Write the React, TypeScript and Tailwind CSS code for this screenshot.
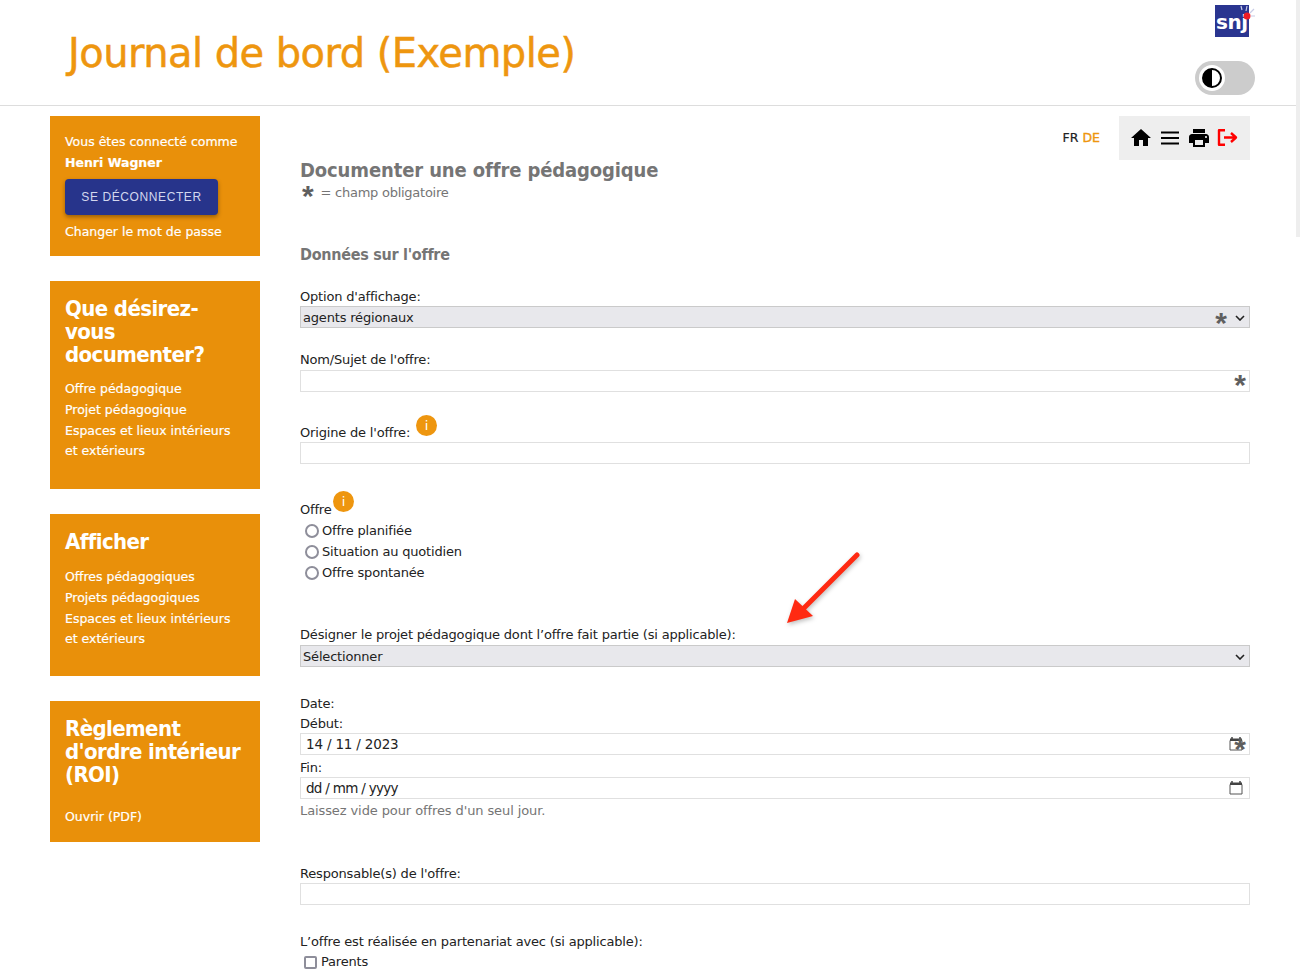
import { MdHome, MdPrint } from 'react-icons/md';

const Star = ({ className }: { className: string }) => (
  <span className={`absolute font-bold text-[#5f5f5f] text-[30px] leading-none tracking-normal font-['Liberation_Sans',sans-serif] ${className}`}>*</span>
);

const Chevron = () => (
  <svg className="absolute right-[4px] top-[8px]" width="10" height="6" viewBox="0 0 10 6" fill="none" stroke="#222" strokeWidth="1.6">
    <path d="M1 1l4 4 4-4" />
  </svg>
);

const CalendarIcon = () => (
  <svg className="absolute right-[6px] top-[3px]" width="14" height="14" viewBox="0 0 14 14" fill="none">
    <path d="M1 3.5h12v9.5H1z" stroke="#555" strokeWidth="1" />
    <path d="M1 1.5h12v2.500H1z" fill="#444" />
    <path d="M3 0v2M11 0v2" stroke="#444" strokeWidth="1.500" />
  </svg>
);

const Info = ({ className }: { className: string }) => (
  <span className={`inline-flex w-[21px] h-[21px] rounded-full bg-[#ee960f] text-white text-[13px] leading-none items-center justify-center ${className}`}>i</span>
);

const Radio = ({ label }: { label: string }) => (
  <div className="flex items-center h-[21px] pl-[5px]">
    <span className="w-[14px] h-[14px] rounded-full border-2 border-[#8e8e9a] bg-white mr-[3px]" />
    <span>{label}</span>
  </div>
);

const Field = ({ className = '', children }: { className?: string; children?: React.ReactNode }) => (
  <div className={`relative h-[22px] border border-[#e0e0e0] bg-white pl-[5px] text-[13.500px] leading-[20px] ${className}`}>{children}</div>
);

const Select = ({ children, star }: { children: React.ReactNode; star?: boolean }) => (
  <div className="relative h-[22px] border border-[#cacaca] bg-[#e8e8ec] pl-[2px] leading-[21px]">
    {children}
    {star && <Star className="right-[22px] top-[1px]" />}
    <Chevron />
  </div>
);

const SideCard = ({ className, title, links, gap }: { className: string; title: React.ReactNode; links: string[]; gap: string }) => (
  <div className={`bg-[#e9900a] px-[15px] text-white ${className}`}>
    <h2 className="text-[22px] leading-[23px] font-bold tracking-[-0.6px] font-['DejaVu_Sans_Condensed','DejaVu_Sans',sans-serif]">{title}</h2>
    <div className={`${gap} leading-[20.800px] text-[12.500px] [-webkit-text-stroke:0.2px_white]`}>
      {links.map((l) => (
        <div key={l}>{l}</div>
      ))}
    </div>
  </div>
);

export default function App() {
  return (
    <div className="relative h-[975px] w-[1300px] overflow-hidden bg-white text-[13px] text-[#222] font-['DejaVu_Sans',sans-serif]">
      {/* Header */}
      <header className="relative h-[106px] border-b border-[#dddddd]">
        <h1 className="absolute left-[68px] top-[27px] text-[40px] leading-[52px] tracking-[-0.55px] text-[#ee960f] [-webkit-text-stroke:0.5px_#ee960f]">Journal de bord (Exemple)</h1>
        <div className="absolute left-[1215px] top-[5px] w-[34px] h-[32px] bg-[#2a3590]" />
        <span className="absolute left-[1216px] top-[10px] text-[20px] leading-[24px] font-bold text-white tracking-[-0.5px]">snj</span>
        <svg className="absolute left-[1236px] top-[5px]" width="20" height="20" viewBox="0 0 20 20">
          <circle cx="11" cy="11" r="3.500" fill="#ee1c25" />
          <path d="M6 5L5 1M10 6l1-5M14 8l4-4M15 11h4" stroke="#c8cce6" strokeWidth="1.200" />
        </svg>
        <div className="absolute left-[1195px] top-[61px] w-[60px] h-[34px] rounded-full bg-[#cccccc]">
          <div className="absolute left-[4px] top-[4px] w-[26px] h-[26px] rounded-full bg-white flex items-center justify-center">
            <svg width="20" height="20" viewBox="0 0 20 20">
              <circle cx="10" cy="10" r="9" fill="none" stroke="#000" strokeWidth="2" />
              <path d="M10 1a9 9 0 0 0 0 18z" fill="#000" />
            </svg>
          </div>
        </div>
      </header>

      <div className="flex pl-[50px] pr-[50px]">
        {/* Sidebar */}
        <aside className="w-[210px] shrink-0 pt-[10px] flex flex-col gap-[25px]">
          <div className="h-[140px] bg-[#e9900a] px-[15px] pt-[15px] text-white text-[12.500px] leading-[21px] [-webkit-text-stroke:0.2px_white]">
            <div>Vous êtes connecté comme</div>
            <div className="font-bold">Henri Wagner</div>
            <button className="mt-[6px] h-[36px] w-[153px] rounded-[4px] bg-[#27348b] text-[12px] tracking-[0.6px] text-[#d3d7ee] font-['Liberation_Sans',sans-serif] [-webkit-text-stroke:0] shadow-[0_2px_4px_rgba(0,0,0,0.35)]">SE DÉCONNECTER</button>
            <div className="mt-[6px]">Changer le mot de passe</div>
          </div>
          <SideCard
            className="h-[208px] pt-[16px]"
            gap="mt-[13px]"
            title={<>Que désirez-<br />vous<br />documenter?</>}
            links={['Offre pédagogique', 'Projet pédagogique', 'Espaces et lieux intérieurs', 'et extérieurs']}
          />
          <SideCard
            className="h-[162px] pt-[16px]"
            gap="mt-[14px]"
            title="Afficher"
            links={['Offres pédagogiques', 'Projets pédagogiques', 'Espaces et lieux intérieurs', 'et extérieurs']}
          />
          <SideCard
            className="h-[141px] pt-[16px]"
            gap="mt-[21px]"
            title={<>Règlement<br />d'ordre intérieur<br />(ROI)</>}
            links={['Ouvrir (PDF)']}
          />
        </aside>

        {/* Main */}
        <main className="relative ml-[40px] flex-1 pt-[10px] tracking-[-0.18px]">
          <div className="flex justify-end items-center h-[44px]">
            <span className="mr-[19px] text-[12.500px] tracking-normal [-webkit-text-stroke:0.2px]">FR <span className="text-[#ee960f] [-webkit-text-stroke:0.4px_#ee960f]">DE</span></span>
            <div className="w-[131px] h-[44px] bg-[#eeeeee] flex items-center pl-[10px] gap-[2px]">
              <MdHome className="w-[24px] h-[24px] text-black" />
              <svg width="24" height="24" viewBox="0 0 24 24" className="ml-[3px]">
                <path d="M3 6.500h18M3 12h18M3 17.500h18" stroke="#000" strokeWidth="2" />
              </svg>
              <MdPrint className="w-[24px] h-[24px] text-black ml-[3px]" />
              <svg width="22" height="20" viewBox="0 0 22 20" fill="none" stroke="#f00" strokeWidth="2.400" className="ml-[4px]">
                <path d="M8 2.200H2v14.600h6M7 9.500h12M14 5l5 4.500-5 4.500" strokeLinejoin="round" />
              </svg>
            </div>
          </div>

          <h2 className="mt-[-1px] text-[20px] leading-[22px] font-bold text-[#757575] tracking-[-0.12px] font-['DejaVu_Sans_Condensed','DejaVu_Sans',sans-serif]">Documenter une offre pédagogique</h2>
          <div className="relative h-[23px] pl-[20.500px] leading-[24px] text-[#757575] tracking-[-0.25px]">
            <Star className="left-[2px] top-[0px]" />= champ obligatoire
          </div>

          <h3 className="mt-[40px] text-[16px] leading-[22px] font-bold text-[#757575] tracking-[-0.28px] font-['DejaVu_Sans_Condensed','DejaVu_Sans',sans-serif]">Données sur l'offre</h3>

          <div className="mt-[21px] h-[19px] leading-[20px]">Option d'affichage:</div>
          <Select star>agents régionaux</Select>

          <div className="mt-[22px] leading-[20px]">Nom/Sujet de l'offre:</div>
          <Field><Star className="right-[3px] top-[-1px]" /></Field>

          <div className="relative mt-[31px] h-[19px] leading-[20px]">Origine de l'offre:<Info className="absolute left-[116px] top-[-8px]" /></div>
          <Field />

          <div className="relative mt-[36px] h-[20px] leading-[20px]">Offre<Info className="absolute left-[33px] top-[-9px]" /></div>
          <div>
            <Radio label="Offre planifiée" />
            <Radio label="Situation au quotidien" />
            <Radio label="Offre spontanée" />
          </div>

          <div className="mt-[42px] leading-[20px]">Désigner le projet pédagogique dont l’offre fait partie (si applicable):</div>
          <Select>Sélectionner</Select>

          <div className="mt-[27px] leading-[20px]">Date:</div>
          <div className="h-[19px] leading-[20px]">Début:</div>
          <Field>14 / 11 / 2023<CalendarIcon /><Star className="right-[3px] top-[0px]" /></Field>
          <div className="mt-[2px] h-[20px] leading-[21px]">Fin:</div>
          <Field className="tracking-[-0.7px]">dd / mm / yyyy<CalendarIcon /></Field>
          <div className="mt-[1px] leading-[21px] text-[#757575] tracking-[-0.1px]">Laissez vide pour offres d'un seul jour.</div>

          <div className="mt-[43px] h-[19px] leading-[20px]">Responsable(s) de l'offre:</div>
          <Field />

          <div className="mt-[27px] h-[19px] leading-[20px]">L’offre est réalisée en partenariat avec (si applicable):</div>
          <div className="flex items-center h-[22px] pl-[4px]">
            <span className="w-[13px] h-[13px] rounded-[2px] border-2 border-[#8e8e9a] mr-[4px]" />
            Parents
          </div>

          {/* Annotation arrow */}
          <svg className="absolute left-[480px] top-[440px] drop-shadow-[1px_2px_2px_rgba(0,0,0,0.25)]" width="90" height="85" viewBox="0 0 90 85" fill="none">
            <path d="M77 9L24 62" stroke="#ff2a12" strokeWidth="5" strokeLinecap="round" />
            <path d="M7 77l8-24 18 17z" fill="#ff2a12" />
          </svg>
        </main>
      </div>

      {/* Scrollbar strip */}
      <div className="absolute right-0 top-0 w-[4px] h-[237px] bg-[#eeeeee]" />
    </div>
  );
}
